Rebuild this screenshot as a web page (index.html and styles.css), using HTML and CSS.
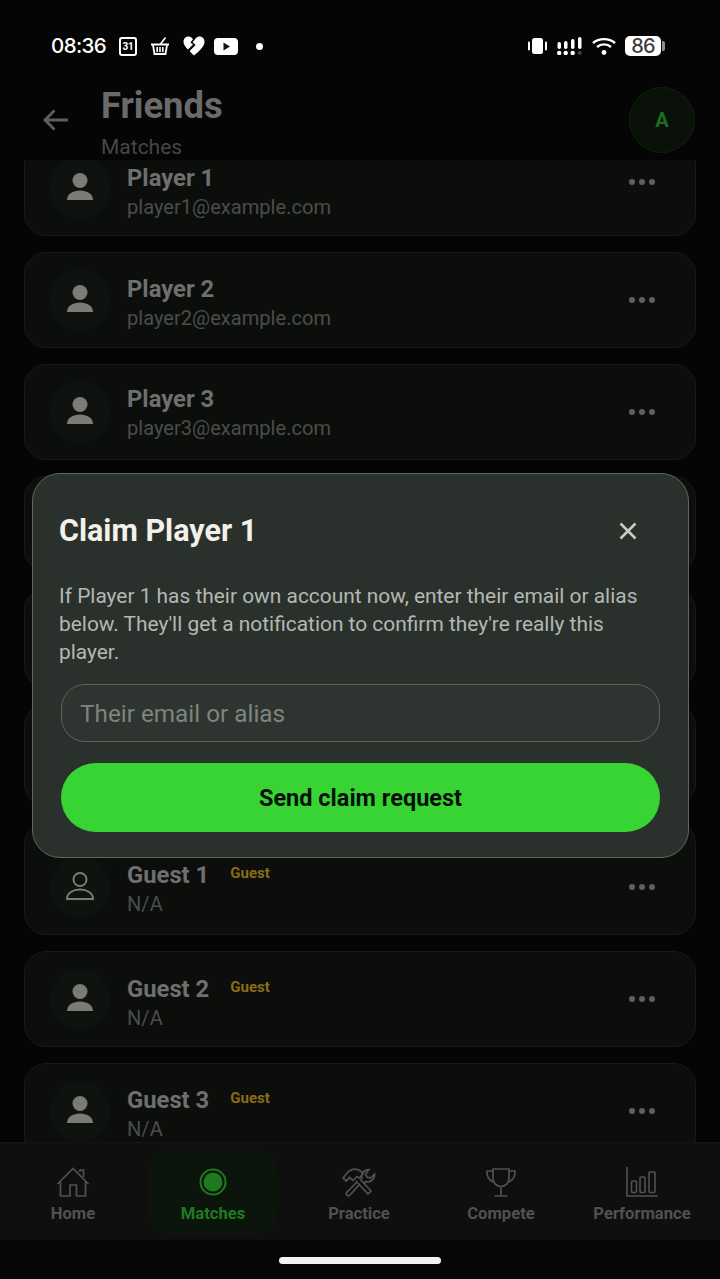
FILE: index.html
```html
<!DOCTYPE html>
<html lang="en">
<head>
<meta charset="utf-8">
<title>Friends</title>
<link rel="stylesheet" href="styles.css">
</head>
<body>
<div class="app">
  <div class="status">
    <div class="status-left">
      <span class="time">08:36</span>
      <span class="cal">31</span>
      <svg class="si basket" viewBox="0 0 20 20"><path d="M10.5 8 L15.5 1.5" fill="none" stroke="#fff" stroke-width="1.6"/><path d="M1 8.5 H19" stroke="#fff" stroke-width="2"/><path d="M3 9 L4.5 18 H15.5 L17 9" fill="none" stroke="#fff" stroke-width="1.8"/><path d="M7.2 11 V16 M10 11 V16 M12.8 11 V16" stroke="#fff" stroke-width="1.6"/></svg>
      <svg class="si heart" viewBox="0 0 22 20"><path d="M10 3.2 C8.6 1.2 6.8 .5 5.4 .5 C2.4 .5 .5 3 .5 5.8 C.5 8.8 2.6 11.2 5 13.4 L10 8.6 L7.4 6.6 Z" fill="#fff"/><path d="M12.6 2.4 C13.8 1 15.2 .5 16.6 .5 C19.6 .5 21.5 3 21.5 5.8 C21.5 11 15.6 15.6 11 19.5 C9.6 18.2 8 17 6.6 15 L12.6 9 L9.6 6.2 Z" fill="#fff"/></svg>
      <svg class="si yt" viewBox="0 0 24 17"><rect x="0" y="0" width="24" height="17" rx="4" fill="#fff"/><path d="M9.5 4.6 L16 8.5 L9.5 12.4 Z" fill="#111"/></svg>
      <span class="note-dot"></span>
    </div>
    <div class="status-right">
      <svg class="si vib" viewBox="0 0 19 16"><rect x="4" y="0" width="11" height="16" rx="2.5" fill="#fff"/><rect x="0" y="3.5" width="2" height="9" rx="1" fill="#fff"/><rect x="17" y="3.5" width="2" height="9" rx="1" fill="#fff"/></svg>
      <svg class="si sig" viewBox="0 0 25 18"><g fill="#fff"><rect x="0.500" y="5" width="3.500" height="7" rx="1.700"/><rect x="7" y="4" width="3.500" height="8" rx="1.700"/><rect x="14" y="2" width="3.500" height="10" rx="1.700"/><rect x="21" y="0" width="3.500" height="12" rx="1.700"/><circle cx="2.200" cy="16" r="2.200"/><circle cx="8.700" cy="16" r="2.200"/><circle cx="15.700" cy="16" r="2.200"/></g><circle cx="22.700" cy="16" r="2" fill="#444"/></svg>
      <svg class="si wifi" viewBox="0 0 24 18"><path d="M1 6 C7 .8 17 .8 23 6" fill="none" stroke="#fff" stroke-width="2.400"/><path d="M5 10 C9 6.500 15 6.500 19 10" fill="none" stroke="#fff" stroke-width="2.400"/><circle cx="12" cy="15.500" r="2.400" fill="#fff"/></svg>
      <div class="batt"><span class="batt-body">86</span><span class="batt-nub"></span></div>
    </div>
  </div>

  <header class="top">
    <svg class="back" viewBox="0 0 26 22"><path d="M25 11 H2 M11.500 1.500 L2 11 L11.500 20.500" fill="none" stroke="#5e5f5d" stroke-width="2.800"/></svg>
    <div class="titles">
      <h1>Friends</h1>
      <p>Matches</p>
    </div>
    <div class="me">A</div>
  </header>

  <main class="list">
    <div class="list-inner">
      <div class="row">
        <div class="ava"><svg class="person" viewBox="0 0 30 30"><circle cx="15" cy="7.500" r="7.500"/><path d="M2 27 C2 21 8 17.500 15 17.500 S28 21 28 27 Z"/></svg></div>
        <div class="who who-low"><div class="name">Player 1</div><div class="sub">player1@example.com</div></div>
        <div class="more raised"><i></i><i></i><i></i></div>
      </div>
      <div class="row">
        <div class="ava"><svg class="person" viewBox="0 0 30 30"><circle cx="15" cy="7.500" r="7.500"/><path d="M2 27 C2 21 8 17.500 15 17.500 S28 21 28 27 Z"/></svg></div>
        <div class="who"><div class="name">Player 2</div><div class="sub">player2@example.com</div></div>
        <div class="more"><i></i><i></i><i></i></div>
      </div>
      <div class="row">
        <div class="ava"><svg class="person" viewBox="0 0 30 30"><circle cx="15" cy="7.500" r="7.500"/><path d="M2 27 C2 21 8 17.500 15 17.500 S28 21 28 27 Z"/></svg></div>
        <div class="who who-high"><div class="name">Player 3</div><div class="sub">player3@example.com</div></div>
        <div class="more"><i></i><i></i><i></i></div>
      </div>
      <div class="row"></div>
      <div class="row row-h100"></div>
      <div class="row row-h102"></div>
      <div class="row row-first-guest">
        <div class="ava"><svg class="person outline" viewBox="0 0 30 30"><circle cx="15" cy="7.500" r="6.500"/><path d="M2 27 C2 21 8 17.500 15 17.500 S28 21 28 27 Z"/></svg></div>
        <div class="who"><div class="name">Guest 1<span class="tag">Guest</span></div><div class="sub">N/A</div></div>
        <div class="more"><i></i><i></i><i></i></div>
      </div>
      <div class="row">
        <div class="ava"><svg class="person" viewBox="0 0 30 30"><circle cx="15" cy="7.500" r="7.500"/><path d="M2 27 C2 21 8 17.500 15 17.500 S28 21 28 27 Z"/></svg></div>
        <div class="who who-low"><div class="name">Guest 2<span class="tag">Guest</span></div><div class="sub">N/A</div></div>
        <div class="more"><i></i><i></i><i></i></div>
      </div>
      <div class="row">
        <div class="ava"><svg class="person" viewBox="0 0 30 30"><circle cx="15" cy="7.500" r="7.500"/><path d="M2 27 C2 21 8 17.500 15 17.500 S28 21 28 27 Z"/></svg></div>
        <div class="who"><div class="name">Guest 3<span class="tag">Guest</span></div><div class="sub">N/A</div></div>
        <div class="more"><i></i><i></i><i></i></div>
      </div>
    </div>
  </main>

  <nav class="tabs">
    <div class="tab">
      <svg class="tab-icon" viewBox="0 0 34 32"><path d="M1.500 18 L17 2.500 L32.500 18 M4.500 15.500 V30 H14 V19 H20.500 V30 H29.500 V15.500 M24 6 V4 H27.500 V11" fill="none" stroke="currentColor" stroke-width="1.700"/></svg>
      <span>Home</span>
    </div>
    <div class="tab tab-on">
      <svg class="tab-icon" viewBox="0 0 34 32"><circle cx="17" cy="16" r="12.500" fill="none" stroke="currentColor" stroke-width="2"/><circle cx="17" cy="16" r="9.500" fill="currentColor"/></svg>
      <span>Matches</span>
    </div>
    <div class="tab">
      <svg class="tab-icon" viewBox="0 0 34 32"><path d="M1 12 L7 5 C11 2.500 15 2.500 18.500 5 L21 8 L17.500 12 L15 10.500 L11 14.500 L7.500 11.500 L4.500 15 Z" fill="none" stroke="currentColor" stroke-width="1.700"/><path d="M14 15 L26 28 L29 25 L18 13" fill="none" stroke="currentColor" stroke-width="1.700"/><path d="M17 19 L8 29 C6 31 3 28.500 5 26 L14.500 16.500 M20 13 C18.500 8 22 3.500 27 3.500 L23.500 8 L25 11 L28.500 12 L32.500 8 C33 13 28.500 17 24 15.500 L21.500 17.500" fill="none" stroke="currentColor" stroke-width="1.700"/></svg>
      <span>Practice</span>
    </div>
    <div class="tab">
      <svg class="tab-icon" viewBox="0 0 34 32"><path d="M9 3 H25 V12 C25 17 21.500 20.500 17 20.500 C12.500 20.500 9 17 9 12 Z M9 5 H3 C2.500 10 5 15 10.500 16.500 M25 5 H31 C31.500 10 29 15 23.500 16.500 M17 20.500 V29.500 M10.500 30 H23.500" fill="none" stroke="currentColor" stroke-width="1.700"/></svg>
      <span>Compete</span>
    </div>
    <div class="tab">
      <svg class="tab-icon" viewBox="0 0 34 32"><path d="M2 1 V30 H33" fill="none" stroke="currentColor" stroke-width="1.600"/><rect x="6.500" y="15" width="5" height="11.500" rx="1" fill="none" stroke="currentColor" stroke-width="1.600"/><rect x="15" y="11" width="5" height="15.500" rx="1" fill="none" stroke="currentColor" stroke-width="1.600"/><rect x="24" y="6" width="6" height="20.500" rx="1" fill="none" stroke="currentColor" stroke-width="1.600"/></svg>
      <span>Performance</span>
    </div>
  </nav>

  <div class="gesture"><span class="gesture-bar"></span></div>

  <section class="modal">
    <div class="modal-head">
      <h2>Claim Player 1</h2>
      <svg class="close" viewBox="0 0 18 18"><path d="M1.500 1.500 L16.500 16.500 M16.500 1.500 L1.500 16.500" fill="none" stroke="#c9cbc6" stroke-width="2.600"/></svg>
    </div>
    <p class="modal-text">If Player 1 has their own account now, enter their email or alias below. They'll get a notification to confirm they're really this player.</p>
    <input class="field" type="text" placeholder="Their email or alias">
    <button class="send" type="button">Send claim request</button>
  </section>
</div>
</body>
</html>
```

FILE: styles.css
```css
* { box-sizing: border-box; }
html, body { margin: 0; padding: 0; background: #040504; }
body { font-family: Roboto, "Liberation Sans", sans-serif; }

.app {
  position: relative;
  width: 720px;
  height: 1279px;
  overflow: hidden;
  display: flex;
  flex-direction: column;
  background: #040504;
}

/* status bar */
.status {
  height: 84px;
  flex: none;
  padding: 8px 55px 0 51px;
  display: flex;
  align-items: center;
  justify-content: space-between;
  color: #fff;
}
.status-left, .status-right { display: flex; align-items: center; }
.time { font: 500 20.500px/1 Inter, Roboto, sans-serif; letter-spacing: -0.6px; width: 68px; }
.si { display: block; flex: none; }
.cal {
  width: 18px; height: 19px;
  border: 2px solid #fff;
  border-radius: 3px;
  font: 700 10px/15px Roboto, sans-serif;
  text-align: center;
  letter-spacing: -0.3px;
}
.basket { width: 20px; height: 20px; margin-left: 13px; }
.heart { width: 22px; height: 20px; margin-left: 13px; }
.yt { width: 24px; height: 17px; margin-left: 9px; }
.note-dot { width: 7px; height: 7px; border-radius: 50%; background: #fff; margin-left: 18px; }
.vib { width: 19px; height: 16px; }
.sig { width: 25px; height: 18px; margin-left: 10px; }
.wifi { width: 24px; height: 18px; margin-left: 10px; }
.batt { display: flex; align-items: center; margin-left: 9px; }
.batt-body {
  width: 36px; height: 20px;
  background: #fff;
  border-radius: 5px;
  color: #3f3f3f;
  font: 500 20px/20px Inter, Roboto, sans-serif;
  letter-spacing: -0.8px;
  text-align: center;
}
.batt-nub { width: 3px; height: 10px; margin-left: 1px; background: #8f8f8f; border-radius: 0 2px 2px 0; }

/* header */
.top {
  height: 76px;
  flex: none;
  padding: 0 25px 5px 43px;
  display: flex;
  align-items: center;
  background: #040504;
  position: relative;
  z-index: 1;
}
.back { width: 26px; height: 22px; flex: none; }
.titles { margin-left: 32px; flex: 1; margin-top: 9px; }
.titles h1 { margin: 0; font-size: 36.400px; line-height: 42px; font-weight: 700; color: #6a6a6a; }
.titles p { margin: 0; font-size: 21px; line-height: 32px; color: #454845; margin-top: 4px; }
.me {
  width: 66px; height: 66px;
  border-radius: 50%;
  background: #091109;
  border: 1px solid #122012;
  color: #1f6e1f;
  font-size: 20px;
  font-weight: 700;
  display: flex; align-items: center; justify-content: center;
}

/* list */
.list { flex: 1; min-height: 0; overflow: hidden; }
.list-inner { margin-top: -20px; padding: 0 24px; display: flex; flex-direction: column; gap: 16px; }
.row {
  height: 96px;
  flex: none;
  background: #0c0e0c;
  border: 1px solid #171a17;
  border-radius: 22px;
  padding: 0 40px 0 25px;
  display: flex;
  align-items: center;
}
.row-h100 { height: 100px; }
.row-h102 { height: 102px; }
.row-first-guest { height: 113px; padding-top: 16px; }
.ava {
  width: 60px; height: 60px;
  border-radius: 50%;
  background: #0f130f;
  flex: none;
  display: flex; align-items: center; justify-content: center;
}
.person { width: 30px; height: 30px; fill: #7b7a77; }
.person.outline { fill: none; stroke: #7b7a77; stroke-width: 2; }
.who { flex: 1; margin-left: 17px; padding-top: 7px; }
.who-low { padding-top: 9px; }
.who-high { padding-top: 3px; }
.name { font-size: 23.800px; line-height: 29px; font-weight: 700; color: #6f6f6f; display: flex; }
.sub { font-size: 20.100px; line-height: 29px; color: #4a4d4a; }
.tag { font-size: 15px; line-height: 25px; font-weight: 700; color: #8a6d14; margin-left: 21px; }
.more { display: flex; gap: 4px; }
.more.raised { margin-bottom: 12px; }
.more i { width: 6px; height: 6px; border-radius: 50%; background: #5f5f5f; display: block; }

/* bottom nav */
.tabs {
  height: 98px;
  flex: none;
  background: #0e0f0e;
  border-top: 1px solid #141614;
  display: grid;
  grid-template-columns: 146px 134px 158px 126px 156px;
}
.tab {
  display: flex;
  flex-direction: column;
  align-items: center;
  padding-top: 23px;
  color: #505250;
  font-size: 16.600px;
  font-weight: 700;
  line-height: 20px;
}
.tab span { margin-top: 6px; }
.tab-icon { width: 34px; height: 32px; display: block; }
.tab-on {
  color: #1f7a1f;
  background: #0b150b;
  border-radius: 22px;
  margin: 7px 2px 5px;
  padding-top: 16px;
}
.gesture { height: 39px; flex: none; display: flex; justify-content: center; align-items: flex-start; padding-top: 17px; background: #060706; }
.gesture-bar { width: 162px; height: 7px; border-radius: 4px; background: #f2f2f2; }

/* modal */
.modal {
  position: absolute;
  left: 32px;
  top: 473px;
  width: 657px;
  height: 385px;
  background: #2a312c;
  border: 1px solid #5f675f;
  border-radius: 28px;
  padding: 40px 28px 0;
  display: flex;
  flex-direction: column;
  z-index: 2;
}
.modal-head { display: flex; align-items: center; justify-content: space-between; padding-right: 23px; margin-left: -2px; }
.modal-head h2 { margin: 0; font-size: 30.500px; line-height: 34px; font-weight: 700; color: #f3f1ea; }
.close { width: 18px; height: 18px; display: block; }
.modal-text { margin: 34px 0 0 -2px; font-size: 20.900px; line-height: 28px; color: #b4b8b2; }
.field {
  display: block;
  width: 100%;
  height: 58px;
  margin-top: 18px;
  padding: 0 18px;
  flex: none;
  background: #2e3530;
  border: 1px solid #5c635d;
  border-radius: 24px;
  font: 400 24.300px Roboto, sans-serif;
  color: #e0e0e0;
  outline: none;
}
.field::placeholder { color: #7e847f; opacity: 1; }
.send {
  display: block;
  width: 100%;
  height: 69px;
  flex: none;
  margin-top: 21px;
  border: 0;
  border-radius: 35px;
  background: #38d433;
  color: #061006;
  font: 700 23.500px Roboto, sans-serif;
}
```
